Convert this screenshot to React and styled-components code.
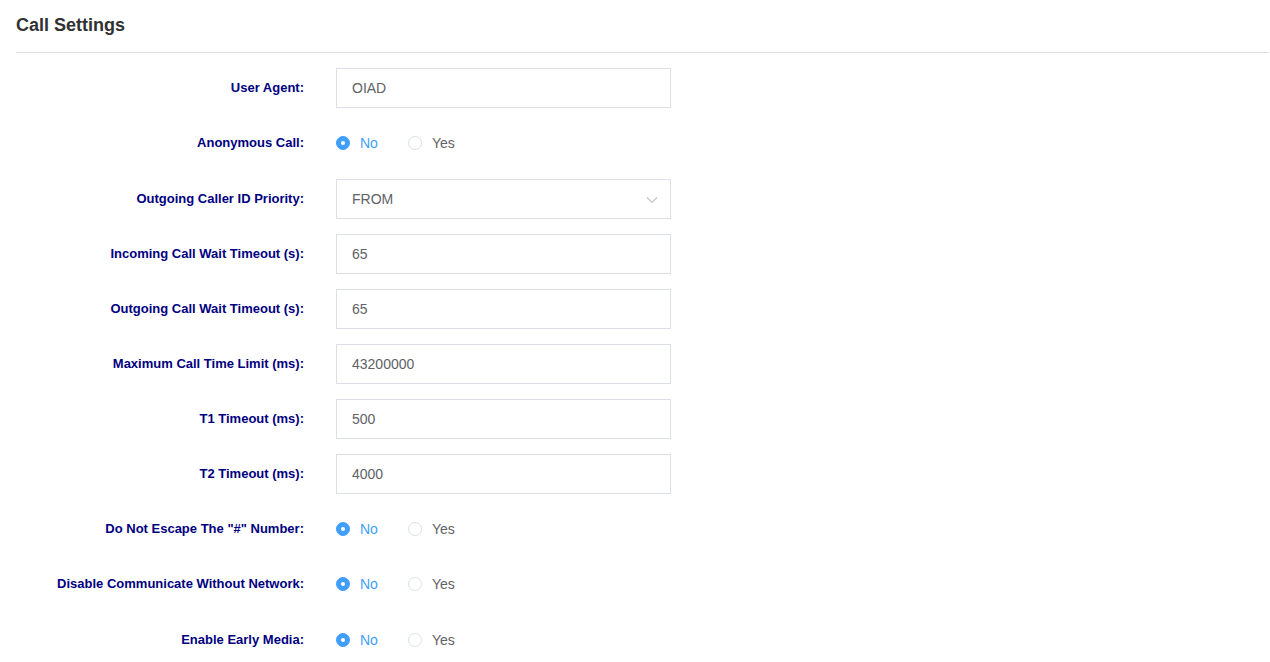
import React from "react";
import styled, { createGlobalStyle } from "styled-components";

const Global = createGlobalStyle`
  html, body { margin: 0; padding: 0; background: #fff; }
  body { font-family: "Liberation Sans", Arial, sans-serif; }
  * { box-sizing: border-box; }
`;

const Page = styled.div`
  padding: 0 1px 0 16px;
  width: 1270px;
  height: 662px;
  overflow: hidden;
`;

const Header = styled.div`
  height: 53px;
  border-bottom: 1px solid #dcdfe6;
  display: flex;
  align-items: center;
  padding-bottom: 2px;
`;

const Title = styled.h2`
  margin: 0;
  font-size: 18px;
  font-weight: bold;
  color: #303133;
`;

const Form = styled.div`
  padding-top: 15px;
  display: flex;
  flex-direction: column;
  gap: 15px;
`;

const Row = styled.div`
  display: grid;
  grid-template-columns: 288px 335px;
  column-gap: 32px;
  align-items: center;
  height: ${(p) => (p.$radio ? "40.5px" : "40px")};
`;

const Label = styled.label`
  text-align: right;
  font-size: 13px;
  font-weight: bold;
  color: #000080;
  white-space: nowrap;
  margin-top: -1px;
`;

const Input = styled.div`
  height: 40px;
  border: 1px solid #dcdfe6;
  border-radius: 0;
  padding: 0 15px;
  display: flex;
  align-items: center;
  justify-content: space-between;
  font-size: 14px;
  color: #606266;
`;

const Radios = styled.div`
  display: flex;
  align-items: center;
  gap: 30px;
`;

const RadioItem = styled.span`
  display: inline-flex;
  align-items: center;
  gap: 10px;
  font-size: 14px;
  color: ${(p) => (p.$checked ? "#409eff" : "#606266")};
`;

const Circle = styled.span`
  width: 14px;
  height: 14px;
  border-radius: 50%;
  border: 1px solid ${(p) => (p.$checked ? "#409eff" : "#dcdfe6")};
  background: ${(p) => (p.$checked ? "#409eff" : "#fff")};
  display: inline-flex;
  align-items: center;
  justify-content: center;
  &::after {
    content: "";
    width: 4px;
    height: 4px;
    border-radius: 50%;
    background: #fff;
    display: ${(p) => (p.$checked ? "block" : "none")};
  }
`;

const Chevron = () => (
  <svg width="12" height="8" viewBox="0 0 12 8" style={{ marginRight: -3, marginTop: 3 }}>
    <path d="M1 1.5 L6 6.5 L11 1.5" fill="none" stroke="#c0c4cc" strokeWidth="1.2" />
  </svg>
);

const Radio = () => (
  <Radios>
    <RadioItem $checked>
      <Circle $checked />
      No
    </RadioItem>
    <RadioItem>
      <Circle />
      Yes
    </RadioItem>
  </Radios>
);

const rows = [
  ["User Agent:", "input", "OIAD"],
  ["Anonymous Call:", "radio"],
  ["Outgoing Caller ID Priority:", "select", "FROM"],
  ["Incoming Call Wait Timeout (s):", "input", "65"],
  ["Outgoing Call Wait Timeout (s):", "input", "65"],
  ["Maximum Call Time Limit (ms):", "input", "43200000"],
  ["T1 Timeout (ms):", "input", "500"],
  ["T2 Timeout (ms):", "input", "4000"],
  ['Do Not Escape The "#" Number:', "radio"],
  ["Disable Communicate Without Network:", "radio"],
  ["Enable Early Media:", "radio"],
];

export default function App() {
  return (
    <>
      <Global />
      <Page>
        <Header>
          <Title>Call Settings</Title>
        </Header>
        <Form>
          {rows.map(([label, type, value]) => (
            <Row key={label} $radio={type === "radio"}>
              <Label>{label}</Label>
              {type === "radio" ? (
                <Radio />
              ) : (
                <Input>
                  <span>{value}</span>
                  {type === "select" && <Chevron />}
                </Input>
              )}
            </Row>
          ))}
        </Form>
      </Page>
    </>
  );
}
